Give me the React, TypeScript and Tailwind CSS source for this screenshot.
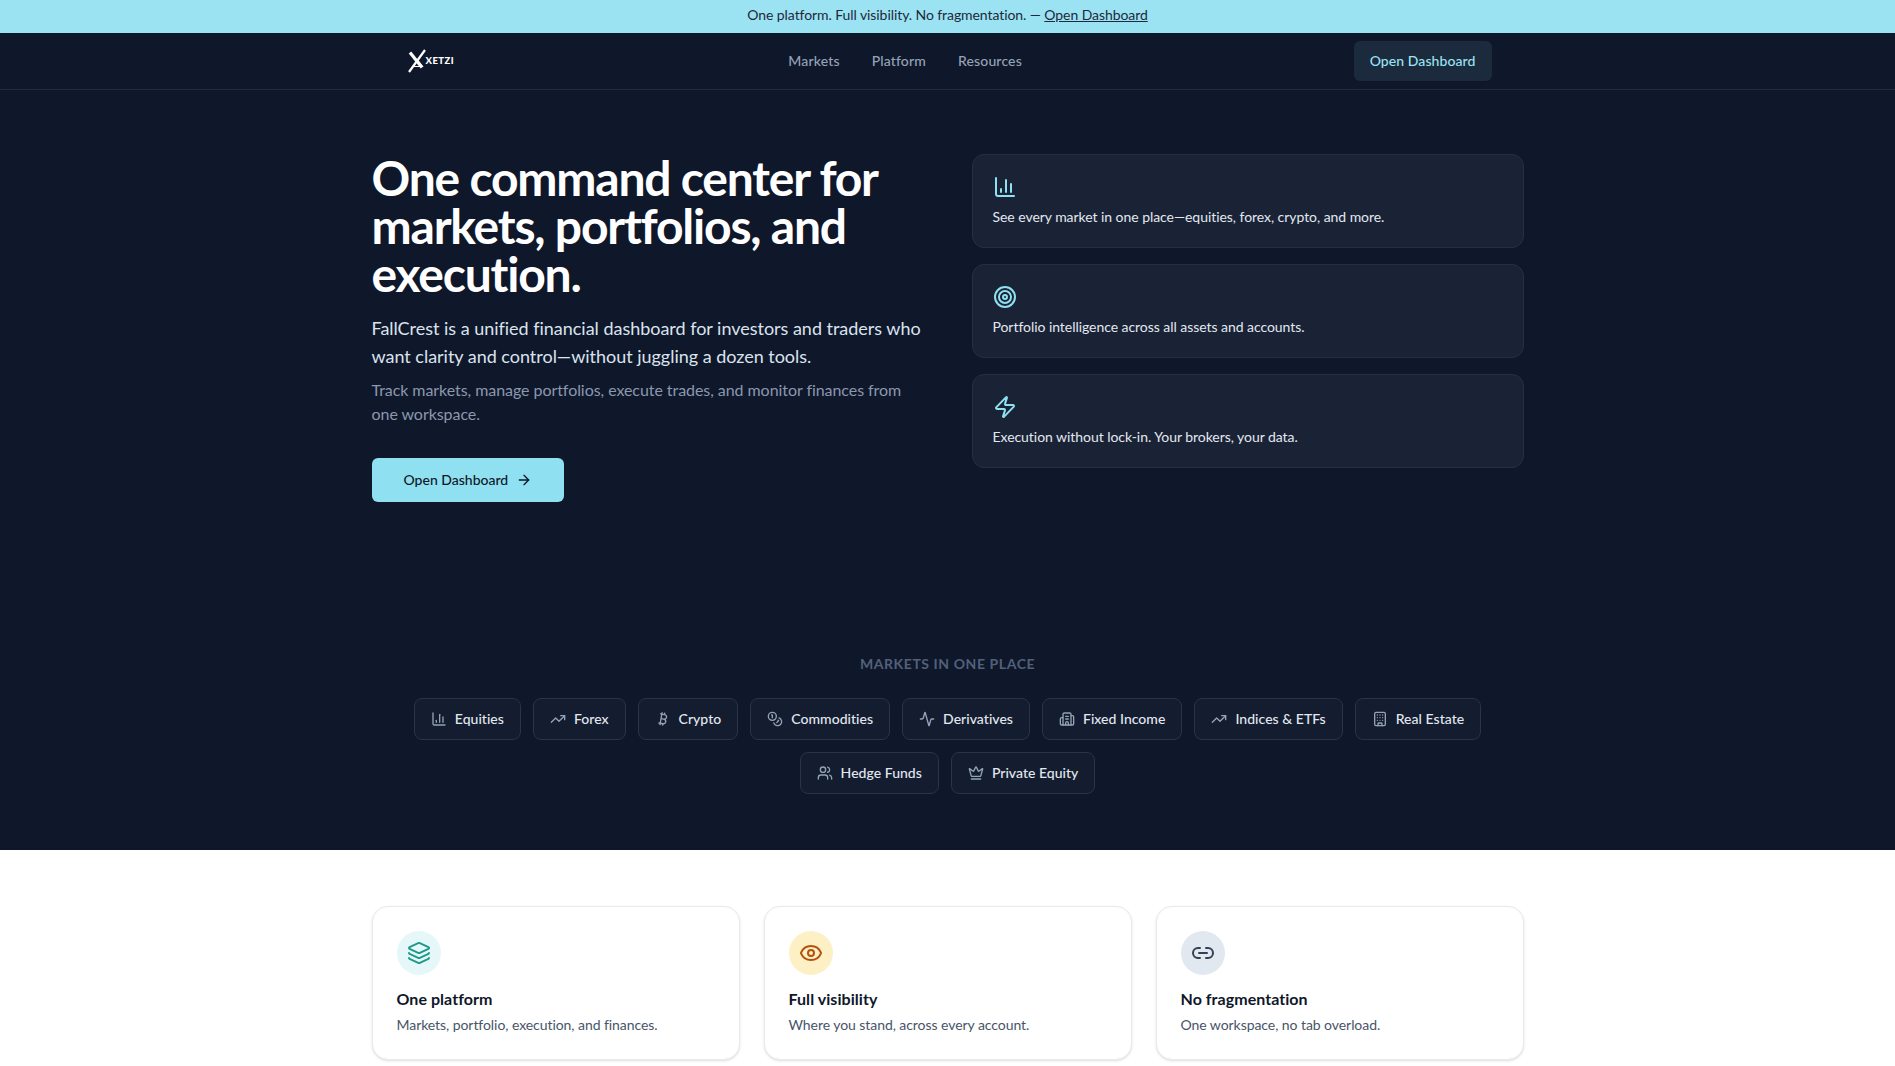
import {
  ArrowRight,
  Bitcoin,
  Building,
  Building2,
  ChartColumn,
  Coins,
  Crown,
  Activity,
  Eye,
  Layers,
  Link2,
  Target,
  TrendingUp,
  Users,
  Zap,
} from "lucide-react";

const features = [
  { Icon: ChartColumn, text: "See every market in one place—equities, forex, crypto, and more." },
  { Icon: Target, text: "Portfolio intelligence across all assets and accounts." },
  { Icon: Zap, text: "Execution without lock-in. Your brokers, your data." },
];

const markets = [
  { Icon: ChartColumn, label: "Equities" },
  { Icon: TrendingUp, label: "Forex" },
  { Icon: Bitcoin, label: "Crypto" },
  { Icon: Coins, label: "Commodities" },
  { Icon: Activity, label: "Derivatives" },
  { Icon: Building2, label: "Fixed Income" },
  { Icon: TrendingUp, label: "Indices & ETFs" },
  { Icon: Building, label: "Real Estate" },
  { Icon: Users, label: "Hedge Funds" },
  { Icon: Crown, label: "Private Equity" },
];

const pillars = [
  { Icon: Layers, title: "One platform", text: "Markets, portfolio, execution, and finances.", circle: "bg-[#e6f7fa]", icon: "text-[#1f9a8a]" },
  { Icon: Eye, title: "Full visibility", text: "Where you stand, across every account.", circle: "bg-[#fdf0c4]", icon: "text-[#b4530f]" },
  { Icon: Link2, title: "No fragmentation", text: "One workspace, no tab overload.", circle: "bg-[#e2e8f0]", icon: "text-[#334155]" },
];

function Logo() {
  return (
    <div className="flex h-10 w-[53px] items-center">
      <svg viewBox="0 0 20 24" className="ml-[3px] h-6 w-5 shrink-0" fill="none" stroke="white">
        <path d="M3 3.5 L15 18.5" strokeWidth="3.2" />
        <path d="M18 1 L2 23" strokeWidth="2.2" />
        <path d="M6 17.5 H15.5 L11 11.5" strokeWidth="1.1" />
      </svg>
      <span className="-ml-[1px] text-[9.5px] leading-none font-black tracking-[0.05em] text-white">XETZI</span>
    </div>
  );
}

export default function App() {
  return (
    <div className="h-screen overflow-hidden bg-white font-['Lato',sans-serif]">
      <div className="bg-[#9be3f2] pt-[5px] pb-2 text-center text-sm tracking-[-0.075px] text-[#1e293b]">
        One platform. Full visibility. No fragmentation. — <a className="underline">Open Dashboard</a>
      </div>

      <div className="bg-[#0f172a]">
        <header className="border-b border-[#232c3e]">
          <div className="mx-auto flex max-w-6xl items-center justify-between px-8 py-2">
            <Logo />
            <nav className="flex items-center gap-8 text-sm font-medium tracking-[0.15px] text-[#94a3b8]">
              <a>Markets</a>
              <a>Platform</a>
              <a>Resources</a>
            </nav>
            <button className="h-10 rounded-md bg-[#1b2a3d] px-4 text-sm font-medium tracking-[0.08px] text-[#9be3f2]">Open Dashboard</button>
          </div>
        </header>

        <section className="mx-auto grid max-w-6xl grid-cols-2 items-start gap-12 pt-16 pb-24">
          <div>
            <h1 className="text-5xl leading-[48px] font-bold tracking-tight text-white">
              One command center for markets, portfolios, and execution.
            </h1>
            <p className="mt-4 text-lg tracking-[-0.02px] text-[#dbe3ee]">
              FallCrest is a unified financial dashboard for investors and traders who want clarity and control—without juggling a dozen tools.
            </p>
            <p className="mt-2 text-base tracking-[-0.06px] text-[#8b98ae]">
              Track markets, manage portfolios, execute trades, and monitor finances from one workspace.
            </p>
            <button className="mt-8 flex h-11 items-center gap-2 rounded-md bg-[#8fe0f0] px-8 text-sm font-medium text-[#0f172a]">
              Open Dashboard
              <ArrowRight className="size-4" />
            </button>
          </div>
          <div className="flex flex-col gap-4">
            {features.map(({ Icon, text }) => (
              <div key={text} className="rounded-xl border border-[#262f42] bg-[#1a2335] p-5">
                <Icon className="mb-2 size-6 text-[#8fe0f0]" />
                <p className="text-sm tracking-[-0.05px] text-[#e2e8f0]">{text}</p>
              </div>
            ))}
          </div>
        </section>

        <section className="mx-auto max-w-6xl py-14">
          <h2 className="mb-6 text-center text-sm font-bold tracking-[0.58px] text-[#526079] uppercase">Markets in one place</h2>
          <div className="flex flex-wrap justify-center gap-3">
            {markets.map(({ Icon, label }) => (
              <div key={label} className="flex items-center gap-2 rounded-lg border border-[#2a3446] bg-[#141c2f] px-4 py-2.5 text-sm font-medium tracking-[0.03px] text-[#e2e8f0]">
                <Icon className="size-4 text-[#94a3b8]" />
                {label}
              </div>
            ))}
          </div>
        </section>
      </div>

      <section className="py-14">
        <div className="mx-auto grid max-w-6xl grid-cols-3 gap-6">
          {pillars.map(({ Icon, title, text, circle, icon }) => (
            <div key={title} className="rounded-2xl border border-[#e8eaed] bg-white p-6 shadow-sm">
              <div className={`mb-3 flex size-11 items-center justify-center rounded-full ${circle}`}>
                <Icon className={`size-6 ${icon}`} />
              </div>
              <h3 className="text-base font-bold tracking-[0.05px] text-[#0f172a]">{title}</h3>
              <p className="mt-1 text-sm tracking-[-0.06px] text-[#475569]">{text}</p>
            </div>
          ))}
        </div>
      </section>
    </div>
  );
}
